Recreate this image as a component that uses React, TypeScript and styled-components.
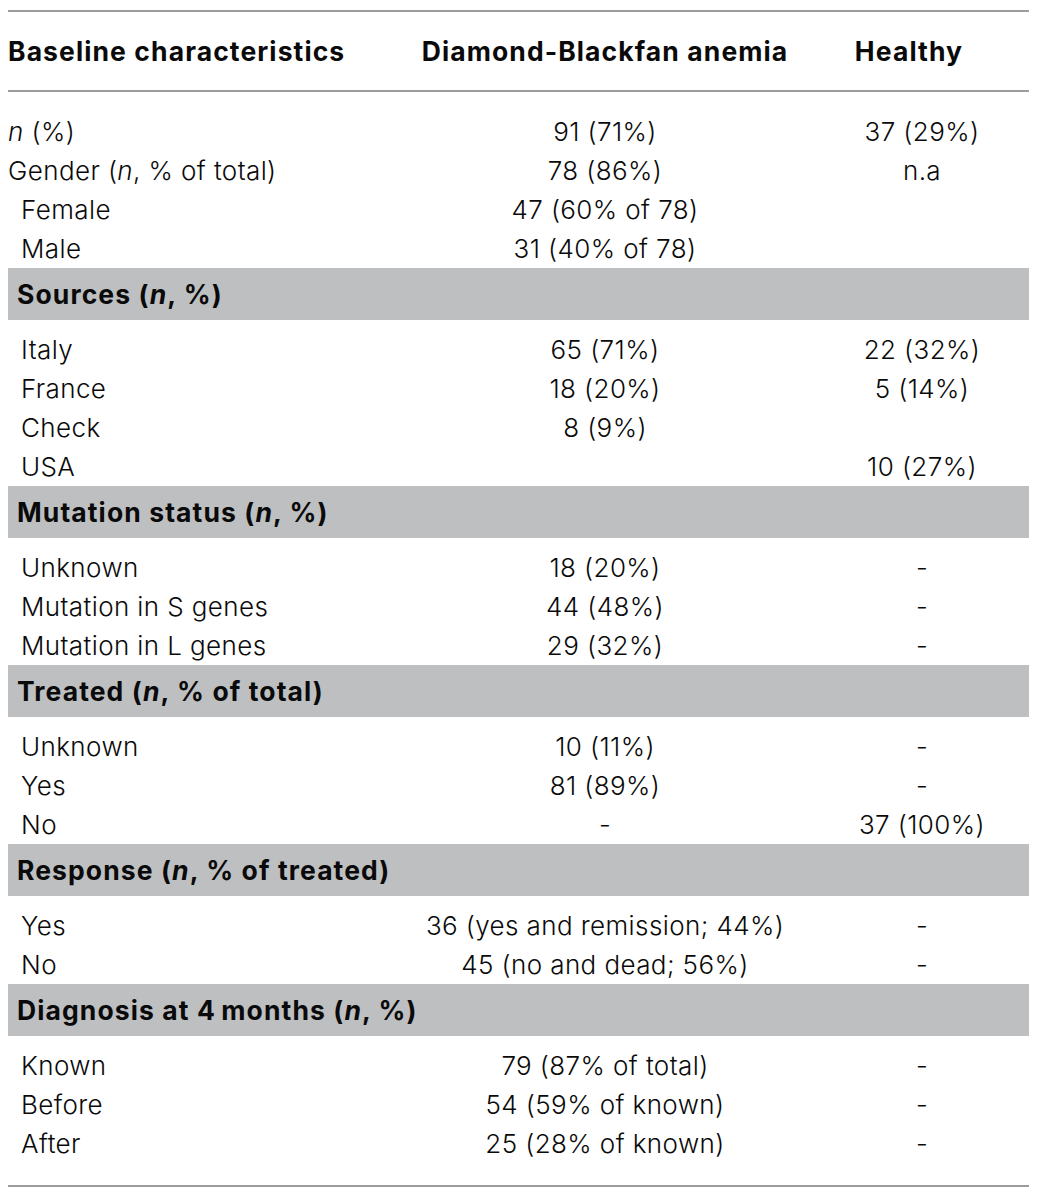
import styled, { createGlobalStyle } from "styled-components";

const GlobalStyle = createGlobalStyle`
  html, body {
    margin: 0;
    padding: 0;
    background: #ffffff;
  }
`;

const Page = styled.div`
  padding: 10px 9px 0 8px;
  font-family: Inter, "Liberation Sans", Arial, sans-serif;
  color: #0a0a0a;
`;

const Table = styled.div`
  display: grid;
  grid-template-columns: 387px 420px 214px;
  border-top: 2px solid #9c9c9c;
  border-bottom: 2px solid #9c9c9c;
  padding-bottom: 22px;
`;

const HeadCell = styled.div<{ $align?: "left" | "center"; $shift?: number }>`
  height: 78px;
  display: flex;
  align-items: center;
  justify-content: ${(p) => (p.$align === "left" ? "flex-start" : "center")};
  padding-right: ${(p) => p.$shift ?? 0}px;
  font-weight: 700;
  font-size: 26.5px;
  letter-spacing: 1.1px;
  white-space: nowrap;
  border-bottom: 2px solid #9c9c9c;
  margin-bottom: 20px;
`;

const Cell = styled.div<{ $indent?: boolean; $center?: boolean }>`
  height: 39px;
  display: flex;
  align-items: center;
  justify-content: ${(p) => (p.$center ? "center" : "flex-start")};
  padding-left: ${(p) => (p.$indent ? 13 : 0)}px;
  font-size: 26px;
  font-weight: 300;
  letter-spacing: 0.4px;
  white-space: nowrap;
`;

const Band = styled.div`
  grid-column: 1 / -1;
  height: 52px;
  background: #bebfc1;
  display: flex;
  align-items: center;
  padding-left: 9px;
  margin-bottom: 10px;
  font-weight: 700;
  font-size: 26.5px;
  letter-spacing: 1.1px;
`;

type Row = { label: React.ReactNode; dba?: string; healthy?: string; indent?: boolean };
type Section = { title: React.ReactNode; rows: Row[] };

const N = () => <i>n</i>;

const intro: Row[] = [
  { label: <><N /> (%)</>, dba: "91 (71%)", healthy: "37 (29%)" },
  { label: <>Gender (<N />, % of total)</>, dba: "78 (86%)", healthy: "n.a" },
  { label: "Female", dba: "47 (60% of 78)", indent: true },
  { label: "Male", dba: "31 (40% of 78)", indent: true },
];

const sections: Section[] = [
  {
    title: <>Sources (<N />, %)</>,
    rows: [
      { label: "Italy", dba: "65 (71%)", healthy: "22 (32%)" },
      { label: "France", dba: "18 (20%)", healthy: "5 (14%)" },
      { label: "Check", dba: "8 (9%)" },
      { label: "USA", healthy: "10 (27%)" },
    ],
  },
  {
    title: <>Mutation status (<N />, %)</>,
    rows: [
      { label: "Unknown", dba: "18 (20%)", healthy: "-" },
      { label: "Mutation in S genes", dba: "44 (48%)", healthy: "-" },
      { label: "Mutation in L genes", dba: "29 (32%)", healthy: "-" },
    ],
  },
  {
    title: <>Treated (<N />, % of total)</>,
    rows: [
      { label: "Unknown", dba: "10 (11%)", healthy: "-" },
      { label: "Yes", dba: "81 (89%)", healthy: "-" },
      { label: "No", dba: "-", healthy: "37 (100%)" },
    ],
  },
  {
    title: <>Response (<N />, % of treated)</>,
    rows: [
      { label: "Yes", dba: "36 (yes and remission; 44%)", healthy: "-" },
      { label: "No", dba: "45 (no and dead; 56%)", healthy: "-" },
    ],
  },
  {
    title: <>Diagnosis at 4&#8201;months (<N />, %)</>,
    rows: [
      { label: "Known", dba: "79 (87% of total)", healthy: "-" },
      { label: "Before", dba: "54 (59% of known)", healthy: "-" },
      { label: "After", dba: "25 (28% of known)", healthy: "-" },
    ],
  },
];

const renderRow = (r: Row, key: string) => [
  <Cell key={key + "a"} $indent={r.indent ?? false}><span>{r.label}</span></Cell>,
  <Cell key={key + "b"} $center>{r.dba ?? ""}</Cell>,
  <Cell key={key + "c"} $center>{r.healthy ?? ""}</Cell>,
];

const App = () => {
  return (
    <>
      <GlobalStyle />
      <Page>
        <Table>
          <HeadCell $align="left">Baseline characteristics</HeadCell>
          <HeadCell>Diamond-Blackfan anemia</HeadCell>
          <HeadCell $shift={26}>Healthy</HeadCell>
          {intro.map((r, i) => renderRow(r, "i" + i))}
          {sections.map((s, si) => [
            <Band key={"b" + si}><span>{s.title}</span></Band>,
            ...s.rows.map((r, ri) => renderRow({ ...r, indent: true }, `s${si}r${ri}`)),
          ])}
        </Table>
      </Page>
    </>
  );
};

export default App;
